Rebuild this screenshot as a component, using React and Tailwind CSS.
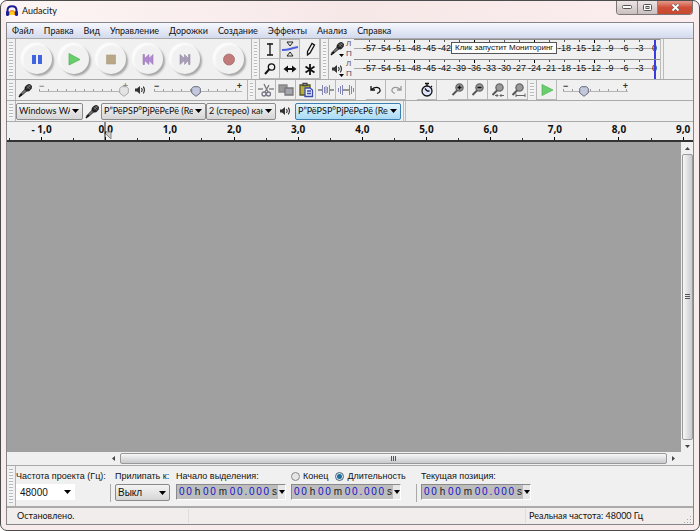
import React from "react";

const ui = "font-['Lato','Open_Sans',sans-serif]";
const db = ["-57","-54","-51","-48","-45","-42","-39","-36","-33","-30","-27","-24","-21","-18","-15","-12","-9","-6","-3"];

function Grip({ className = "" }) {
  return (
    <div className={`w-[9px] shrink-0 self-stretch border-r border-[#b5b5b5] bg-[#f0f0f0] px-[2px] py-[3px] ${className}`}>
      <div className="h-full w-full bg-[repeating-linear-gradient(to_bottom,#b9b9b9_0px,#b9b9b9_1px,#f7f7f7_1px,#f7f7f7_3px)]" />
    </div>
  );
}

function RoundButton({ label, className = "", children }) {
  return (
    <button aria-label={label} className={`flex h-[30px] w-[30px] shrink-0 items-center justify-center rounded-full bg-[#f1f1f1] shadow-[2px_2px_2px_#a8a8a8,-1px_-1px_2px_#ffffff,inset_1px_1px_2px_#ffffff] ${className}`}>
      <svg width="16" height="16" viewBox="0 0 16 16">{children}</svg>
    </button>
  );
}

function Mic({ size = 16 }) {
  return (
    <svg width={size} height={size} viewBox="0 0 16 16" className="shrink-0">
      <path d="M8 6 L10 8 L3 14 L1.500 13 Z" fill="#777" stroke="#111" strokeWidth=".8" />
      <path d="M1 15 L4 11.500" stroke="#111" strokeWidth="1.400" />
      <ellipse cx="11" cy="5" rx="4.200" ry="3.400" transform="rotate(-45 11 5)" fill="#222" />
      <path d="M9 3 L13 7 M11 2 L14 5 M9.500 6 L13 2.500" stroke="#aaa" strokeWidth=".7" />
    </svg>
  );
}

function Speaker() {
  return (
    <svg width="13" height="12" viewBox="0 0 13 12" className="shrink-0">
      <path d="M1 4.500 H3 L6 2 V10 L3 7.500 H1 Z" fill="#333" />
      <path d="M7.500 4 Q9 6 7.500 8 M9.300 2.600 Q11.500 6 9.300 9.400" fill="none" stroke="#222" strokeWidth="1.100" />
    </svg>
  );
}

function ToolButton({ label, className = "bg-[#f0f0f0]", children }) {
  return (
    <button aria-label={label} className={`flex h-5 w-5 shrink-0 items-center justify-center border-r border-b border-[#b8b8b8] ${className}`}>
      <svg width="16" height="16" viewBox="0 0 16 16" fill="none" stroke="#111" strokeWidth="1.300">{children}</svg>
    </button>
  );
}

function Meter({ kind }) {
  return (
    <div className="flex h-5 items-center">
      <button aria-label={kind === "mic" ? "Индикатор записи" : "Индикатор воспроизведения"} className="relative flex h-5 w-[17px] shrink-0 items-start justify-center pt-[2px]">
        {kind === "mic" ? <Mic size={15} /> : <span className="pt-[2px]"><Speaker /></span>}
        <svg width="5" height="3" viewBox="0 0 5 3" className="absolute right-[2px] bottom-[2px]"><path d="M0 0H5L2.500 3Z" fill="#000" /></svg>
      </button>
      <div className="flex h-5 w-[7px] shrink-0 flex-col justify-between text-[8px] leading-[10px]"><span className="text-[#6b4a3a]">Л</span><span className="text-[#3a4a6b]">П</span></div>
      <div className="relative ml-px flex h-5 w-[306px] shrink-0 overflow-hidden border-t border-[#8c8c8c] bg-[#f0f0f0] pl-[8px] text-[9px] text-[#111]">
        <span className="absolute top-[8px] left-0 h-px w-[300px] bg-[#a8a8a8]" />
        {db.map((n, i) => (
          <span key={n} className="relative flex w-[15px] shrink-0 flex-col items-center">
            <i className={i % 4 === 3 ? "h-[3px] w-px bg-black" : "h-[2px] w-px bg-[#555]"} />
            <span className={i % 4 === 3 ? "leading-[11px]" : "leading-[13px]"}>{n}</span>
          </span>
        ))}
        <span className="relative flex w-[10px] shrink-0 flex-col items-end"><i className="h-[2px] w-px" /><span className="leading-[13px]">0</span></span>
        <span className="absolute top-0 right-[4px] h-5 w-[2px] bg-[#3a3ae0]" />
      </div>
    </div>
  );
}

function Slider({ label, className, pos, off }) {
  return (
    <div className={`relative h-[14px] shrink-0 ${className}`}>
      <input type="range" aria-label={label} defaultValue={pos} className="absolute inset-0 h-full w-full opacity-0" />
      <span className={`pointer-events-none flex justify-between text-[9px] leading-[6px] font-bold ${off ? "text-[#888]" : "text-[#333]"}`}><span>−</span><span>+</span></span>
      <span className="pointer-events-none block h-[2px] w-full bg-[repeating-linear-gradient(to_right,#999_0px,#999_1px,transparent_1px,transparent_9px)]" />
      <span className="pointer-events-none block h-px w-full bg-[#b4b4b4]" />
      <svg width="10" height="11" viewBox="0 0 10 11" className="pointer-events-none absolute top-[3px] -translate-x-1/2" style={{ left: `${pos}%` }}>
        <path d="M2.500 .7H7.500L9.300 2.500V7L5 10.300L.7 7V2.500Z" fill={off ? "#e4e4e4" : "#c3c7dc"} stroke={off ? "#a8a8a8" : "#666a80"} />
      </svg>
    </div>
  );
}

function Arrow() {
  return <svg width="7" height="4" viewBox="0 0 7 4" className="pointer-events-none absolute top-1/2 right-[4px] -translate-y-1/2"><path d="M0 0H7L3.500 4Z" fill="#000" /></svg>;
}

function Pick({ label, value, className = "", box = "border-[#8a8a8a] bg-linear-to-b from-[#f4f4f4] to-[#d6d6d6]", font = `text-[9px] ${ui}` }) {
  return (
    <div className={`relative h-[17px] shrink-0 ${className}`}>
      <select aria-label={label} className={`h-full w-full appearance-none rounded-[2px] border pr-3 pl-[2px] leading-[14px] text-[#111] ${box} ${font}`}>
        <option>{value}</option>
      </select>
      <Arrow />
    </div>
  );
}

function Time({ label, id }) {
  return (
    <div className="flex h-4 w-[110px] border border-[#8a8a8a] border-r-white border-b-white bg-[#bdbdbd]">
      <div id={id} role="textbox" aria-label={label} tabIndex={0} className="flex flex-1 items-center justify-between pl-[2px] text-[10px] leading-[14px] text-[#1414c8]">
        {"00h00m00.000s".split("").map((c, i) => <span key={i} className={/[hms]/.test(c) ? "px-px text-[#222]" : ""}>{c}</span>)}
      </div>
      <button aria-label={`${label} формат`} className="flex w-[7px] items-center justify-center bg-[#e6e6e6]"><svg width="6" height="4" viewBox="0 0 6 4"><path d="M0 0H6L3 4Z" fill="#000" /></svg></button>
    </div>
  );
}

function Lens({ children }) {
  return <g><circle cx="9.500" cy="5.500" r="3.600" fill="#999" stroke="#666" /><path d="M7 8.500L2.500 13" stroke="#555" strokeWidth="2" />{children}</g>;
}

export default function App() {
  return (
    <div className="flex h-screen w-full flex-col overflow-hidden rounded-[7px] border border-[#4c4c4c] bg-[#f8ecec] px-[5px] pb-[5px] font-['Liberation_Sans',Arial,sans-serif] text-[9px] text-[#111]">
      <header className="flex h-[21px] shrink-0 items-start justify-between bg-linear-to-r from-[#fdf5f5] via-[#f7e8e8] to-[#fceeee]">
        <div className="flex h-5 items-center gap-1">
          <svg width="12" height="12" viewBox="0 0 12 12"><path d="M1.500 8V5.500Q1.500 1.200 6 1.200T10.500 5.500V8" fill="none" stroke="#1d1d96" strokeWidth="2" /><path d="M2.500 10V7Q6 3 9.500 7V10Z" fill="#f28a12" /><path d="M4 10V7.500Q6 5 8 7.500V10Z" fill="#ffd21e" /><rect y="6" width="3" height="5" rx="1.200" fill="#1d1d96" /><rect x="9" y="6" width="3" height="5" rx="1.200" fill="#1d1d96" /></svg>
          <h1 className={`leading-[14px] ${ui}`}>Audacity</h1>
        </div>
        <div className="mr-px flex h-[14px] overflow-hidden rounded-b-[4px] border border-t-0 border-[#7b7777]">
          <button aria-label="Свернуть" className="flex w-[21px] items-center justify-center border-r border-[#8b8585] bg-linear-to-b from-[#eee5e5] to-[#c9bfbf]"><svg width="10" height="5"><rect x=".5" y=".5" width="9" height="3" rx="1" fill="#fff" stroke="#555" /></svg></button>
          <button aria-label="Развернуть" className="flex w-5 items-center justify-center border-r border-[#8b8585] bg-linear-to-b from-[#eee5e5] to-[#c9bfbf]"><svg width="10" height="8"><rect x=".5" y=".5" width="8" height="6" rx="1" fill="#fff" stroke="#555" /><rect x="3" y="2.500" width="3" height="2" fill="#ccc" stroke="#555" /></svg></button>
          <button aria-label="Закрыть" className="flex w-[34px] items-center justify-center bg-linear-to-b from-[#e49a8b] via-[#cf4f38] to-[#c8482f]"><svg width="9" height="9" viewBox="0 0 9 9"><path d="M1.500 1.500L7.500 7.500M7.500 1.500L1.500 7.500" stroke="#555" strokeWidth="3" /><path d="M1.500 1.500L7.500 7.500M7.500 1.500L1.500 7.500" stroke="#fff" strokeWidth="1.800" /></svg></button>
        </div>
      </header>

      <main className="flex min-h-0 flex-1 flex-col border border-[#85858a] bg-[#f0f0f0]">
        <nav className={`flex h-[15px] shrink-0 items-center gap-[10px] bg-linear-to-b from-[#f6f8fd] to-[#d3daee] pl-[5px] leading-[14px] ${ui}`}>
          {["Файл","Правка","Вид","Управление","Дорожки","Создание","Эффекты","Анализ","Справка"].map((m) => <button key={m}>{m}</button>)}
        </nav>

        <section className="flex h-[42px] shrink-0 border-t border-b border-[#aaa]">
          <Grip />
          <div className="flex w-[235px] shrink-0 items-center gap-[7px] pl-[6px]">
            <RoundButton label="Пауза"><path d="M3 4h4v9H3zM9 4h4v9H9z" fill="#4165e0" /></RoundButton>
            <RoundButton label="Играть"><path d="M3 2.500L14 8.500L3 14Z" fill="#66cf6b" stroke="#4fae55" strokeWidth=".7" /></RoundButton>
            <RoundButton label="Стоп"><path d="M3.500 4h9v9h-9z" fill="#b8a888" stroke="#a89a7c" strokeWidth=".6" /></RoundButton>
            <RoundButton label="К началу"><path d="M3 3.500h1.500v4L9 3.500v4l4-4v10l-4-4v4l-4.500-4v4H3z" fill="#b28ad2" stroke="#8d69ab" strokeWidth=".5" /></RoundButton>
            <RoundButton label="К концу"><path d="M13 3.500h-1.500v4L7.500 3.500v4L3 3.500v10l4.500-4v4l4-4v4H13z" fill="#aa9fba" stroke="#8b8199" strokeWidth=".5" /></RoundButton>
            <RoundButton label="Запись" className="ml-[7px]"><circle cx="8" cy="8.500" r="5.500" fill="#c27b7b" stroke="#9e6464" strokeWidth=".7" /></RoundButton>
          </div>
          <Grip className="border-l" />
          <div className="grid w-[60px] shrink-0 grid-cols-3 grid-rows-2">
            <ToolButton label="Выделение"><path d="M5 3h2.500l.5.500.5-.5H11M5 14h2.500l.5-.5.5.500H11M8 3v11" /></ToolButton>
            <ToolButton label="Огибающая" className="border-t border-l bg-[#e8e8e8]"><path d="M5 1h6L8 5zM5 15h6L8 11z" strokeWidth=".9" /><path d="M0 9Q5 9 8 8T16 6" stroke="#4d60df" strokeWidth="2" /></ToolButton>
            <ToolButton label="Карандаш"><path d="M5.500 10.500L10 2.500L12.500 4L8 12L5.500 14Z" /></ToolButton>
            <ToolButton label="Масштаб"><circle cx="9.500" cy="6" r="3.200" /><path d="M7 8.500L3 13" strokeWidth="2" /></ToolButton>
            <ToolButton label="Сдвиг"><path d="M3 8H13" strokeWidth="1.800" /><path d="M1.500 8L6 4.500V11.500ZM14.500 8L10 4.500V11.500Z" fill="#111" stroke="none" /></ToolButton>
            <ToolButton label="Универсальный"><path d="M8 3V14M3.500 5.500L12.500 11.500M12.500 5.500L3.500 11.500" strokeWidth="1.800" /></ToolButton>
          </div>
          <Grip className="border-l" />
          <div className="relative flex shrink-0 flex-col">
            <Meter kind="mic" />
            <Meter kind="spk" />
            <div role="tooltip" className="absolute top-[3px] left-[122px] h-3 border border-[#555] bg-white px-[3px] text-[8px] leading-[10px] whitespace-nowrap">Клик запустит Мониторинг</div>
          </div>
          <div className="w-[4px] border-r border-l border-[#bbb]" />
        </section>

        <section className="flex h-[21px] shrink-0 items-center border-b border-[#aaa]">
          <Grip />
          <div className="flex w-[231px] shrink-0 items-center pl-[2px]">
            <Mic size={15} />
            <Slider label="Громкость записи" className="ml-[6px] w-[89px]" pos={95} off />
            <span className="ml-[6px] flex"><Speaker /></span>
            <Slider label="Громкость воспроизведения" className="ml-[7px] w-[88px]" pos={48} />
          </div>
          <Grip className="border-l" />
          <ToolButton label="Вырезать"><path d="M0 7H5M11 7H16" stroke="#888" /><path d="M6 2L10 10M11 3L7 10" stroke="#777" /><circle cx="6" cy="12" r="2" stroke="#778" /><circle cx="10.500" cy="12" r="2" stroke="#778" /></ToolButton>
          <ToolButton label="Копировать"><path d="M1 3h8v7H1z" fill="#999" stroke="#888" /><path d="M7 6h8v7H7z" fill="#a5a5af" stroke="#777" /></ToolButton>
          <ToolButton label="Вставить"><path d="M2 3h10v10H2z" fill="#b7ae37" stroke="#555421" /><path d="M5 1.500h4v2H5z" fill="#ddd" stroke="#444" /><path d="M7 6h5l2.500 2v6.500H7z" fill="#e8edff" stroke="#3b4bb0" /><path d="M9 9h4M9 11.500h4" stroke="#3b4bb0" /></ToolButton>
          <ToolButton label="Обрезать"><path d="M0 8H4M12 8H16" stroke="#777" /><path d="M4.500 3V13M6.500 5V11M8 4V12M9.500 5V11M11.500 3V13" stroke="#8585b5" strokeWidth="1" /></ToolButton>
          <ToolButton label="Тишина"><path d="M4 8H12" stroke="#777" /><path d="M.5 6V10M2.500 4V12M4.500 3V13M11.500 3V13M13.500 4V12M15.500 6V10" stroke="#8585b5" strokeWidth="1" /></ToolButton>
          <ToolButton label="Отменить" className="ml-[10px]"><path d="M3 4V8H7M3.500 7.500Q8 4 11.500 6.500Q13.500 10 9 11.500" /></ToolButton>
          <ToolButton label="Вернуть"><path d="M13 4V8H9M12.500 7.500Q8 4 4.500 6.500Q2.500 10 7 11.500" stroke="#999" /></ToolButton>
          <ToolButton label="Синхронизация" className="ml-[11px]"><circle cx="8" cy="9" r="5" fill="#dfe5fb" /><path d="M6 1.500H10M8 2V4M8 9L6 6.500M8 9H10.500M12 4L13 5" /></ToolButton>
          <ToolButton label="Приблизить" className="ml-[11px]"><Lens><path d="M7.500 5.500h4M9.500 3.500v4" /></Lens></ToolButton>
          <ToolButton label="Отдалить"><Lens><path d="M7.500 5.500h4" /></Lens></ToolButton>
          <ToolButton label="Уместить выделение"><Lens /><path d="M5 13.500H8M10 13.500H14M6.500 12L8 13.500L6.500 15M11.500 12L10 13.500L11.500 15" stroke="#666" strokeWidth="1" /></ToolButton>
          <ToolButton label="Уместить проект"><Lens /><path d="M6 13.500H15M6 11.500V15M15 11.500V15" stroke="#666" strokeWidth="1" /></ToolButton>
          <Grip />
          <ToolButton label="Играть на скорости"><path d="M3 2.500L14 8L3 13.500Z" fill="#69cf6c" stroke="#4fae55" strokeWidth=".7" /></ToolButton>
          <Slider label="Скорость" className="ml-[6px] w-[65px]" pos={32} />
        </section>

        <section className="flex h-[21px] shrink-0 items-center border-b border-[#aaa]">
          <Grip />
          <Pick label="Аудиосистема" value="Windows WASAPI" className="w-[67px]" />
          <span className="flex w-[18px] justify-center"><Mic size={15} /></span>
          <Pick label="Устройство записи" value={"Р”РёРЅР°РјРёРєРё (Realtek)"} className="w-[105px]" />
          <Pick label="Каналы" value="2 (стерео) канала" className="w-[70px]" />
          <span className="flex w-[19px] justify-center"><Speaker /></span>
          <Pick label="Устройство воспроизведения" value={"Р”РёРЅР°РјРёРєРё (Realtek)"} className="w-[106px]" box="border-[#3c7fb1] bg-linear-to-b from-[#e3f4fd] to-[#a9dbf5]" />
          <div className="ml-[2px] h-full w-[3px] border-r border-l border-[#bbb]" />
        </section>

        <section className="relative flex h-5 shrink-0 overflow-hidden border-b-2 border-[#333] pl-[2px] font-['Open_Sans',sans-serif] text-[10px] font-bold">
          {["- 1,0","0,0","1,0","2,0","3,0","4,0","5,0","6,0","7,0","8,0","9,0"].map((n) => (
            <div key={n} className="flex w-[9.38%] shrink-0 items-end">
              <i className="h-[2px] w-px bg-[#333]" />
              <div className="flex flex-1 flex-col items-center leading-[15px]"><span>{n}</span><i className="h-[3px] w-px bg-black" /></div>
            </div>
          ))}
          <svg width="8" height="19" viewBox="0 0 8 19" className="absolute top-0 left-[14.200%]"><path d="M1 0V18" stroke="#222" /><path d="M2 10H7V17L2 12" fill="#ccc" stroke="#888" /></svg>
        </section>

        <div className="flex min-h-0 flex-1">
          <div className="flex-1 bg-[#a0a0a0]" />
          <div className="flex w-[12px] shrink-0 flex-col items-center bg-[#f0f0f0]">
            <button aria-label="Вверх" className="flex h-3 items-center"><svg width="5" height="3"><path d="M0 3L2.500 0L5 3Z" fill="#444" /></svg></button>
            <div className="flex w-[11px] flex-1 items-center justify-center rounded-[2px] border border-[#999] bg-linear-to-r from-[#f7f7f7] to-[#c9cacc]"><svg width="5" height="6"><path d="M0 .5H5M0 2.500H5M0 4.500H5" stroke="#555" /></svg></div>
            <button aria-label="Вниз" className="flex h-3 items-center"><svg width="5" height="3"><path d="M0 0L2.500 3L5 0Z" fill="#444" /></svg></button>
          </div>
        </div>
        <div className="flex h-[14px] shrink-0 items-center border-b border-[#aaa] pr-[13px] pl-[100px]">
          <button aria-label="Влево" className="flex w-[13px] justify-center"><svg width="3" height="5"><path d="M3 0L0 2.500L3 5Z" fill="#444" /></svg></button>
          <div className="flex h-[11px] flex-1 items-center justify-center rounded-[2px] border border-[#999] bg-linear-to-b from-[#f7f7f7] to-[#c9cacc]"><svg width="6" height="5"><path d="M.5 0V5M2.500 0V5M4.500 0V5" stroke="#555" /></svg></div>
          <button aria-label="Вправо" className="flex w-[13px] justify-center"><svg width="3" height="5"><path d="M0 0L3 2.500L0 5Z" fill="#444" /></svg></button>
        </div>

        <section className="flex h-[42px] shrink-0 border-b-2 border-[#aaa]">
          <Grip />
          <div className="w-[94px] shrink-0 pt-[3px]">
            <label htmlFor="rate" className="block h-[15px] leading-[14px] whitespace-nowrap">Частота проекта (Гц):</label>
            <div className="relative h-4 w-[59px]"><input id="rate" defaultValue="48000" className="h-4 w-full bg-white pl-[4px] text-[10px]" /><Arrow /></div>
          </div>
          <div className="mt-[18px] h-[18px] w-px bg-[#aaa]" />
          <div className="ml-[4px] w-[61px] shrink-0 pt-[3px]">
            <span className="block h-[15px] leading-[14px] whitespace-nowrap">Прилипать к:</span>
            <Pick label="Прилипать к" value="Выкл" className="w-[55px]" font="text-[10px] font-['Liberation_Sans',Arial,sans-serif]" />
          </div>
          <div className="w-[115px] shrink-0 pt-[3px]">
            <span className="block h-[15px] leading-[14px] whitespace-nowrap">Начало выделения:</span>
            <Time label="Начало выделения" id="start" />
          </div>
          <div className="w-[125px] shrink-0 pt-[3px]">
            <div className="flex h-[15px] items-start gap-[7px] leading-[14px]">
              {["Конец", "Длительность"].map((t, i) => (
                <label key={t} className="flex items-center gap-[3px]">
                  <input type="radio" name="mode" defaultChecked={i === 1} className="h-[9px] w-[9px] appearance-none rounded-full border border-[#8b8b8b] bg-[#e6e6e6] checked:border-[#4b6578] checked:bg-[radial-gradient(circle,#1c6fa0_0_2px,#d9e6ee_3px)]" />{t}
                </label>
              ))}
            </div>
            <Time label="Длительность" id="length" />
          </div>
          <div className="mt-[18px] h-[18px] w-px bg-[#aaa]" />
          <div className="ml-[4px] pt-[3px]">
            <span className="block h-[15px] leading-[14px] whitespace-nowrap">Текущая позиция:</span>
            <Time label="Текущая позиция" id="position" />
          </div>
        </section>

        <footer className={`flex h-4 shrink-0 items-center bg-[#f1eded] leading-[14px] ${ui}`}>
          <span className="w-[182px] border-r border-[#ddd] pl-[10px]">Остановлено.</span>
          <span className="flex-1" />
          <span className="w-[159px] border-l border-[#ddd] pl-[3px]">Реальная частота: 48000 Гц</span>
          <svg width="8" height="8" viewBox="0 0 8 8" className="mr-px self-end"><path d="M6 0h1v1H6zM6 3h1v1H6zM3 3h1v1H3zM6 6h1v1H6zM3 6h1v1H3zM0 6h1v1H0z" fill="#aaa" /></svg>
        </footer>
      </main>
    </div>
  );
}
